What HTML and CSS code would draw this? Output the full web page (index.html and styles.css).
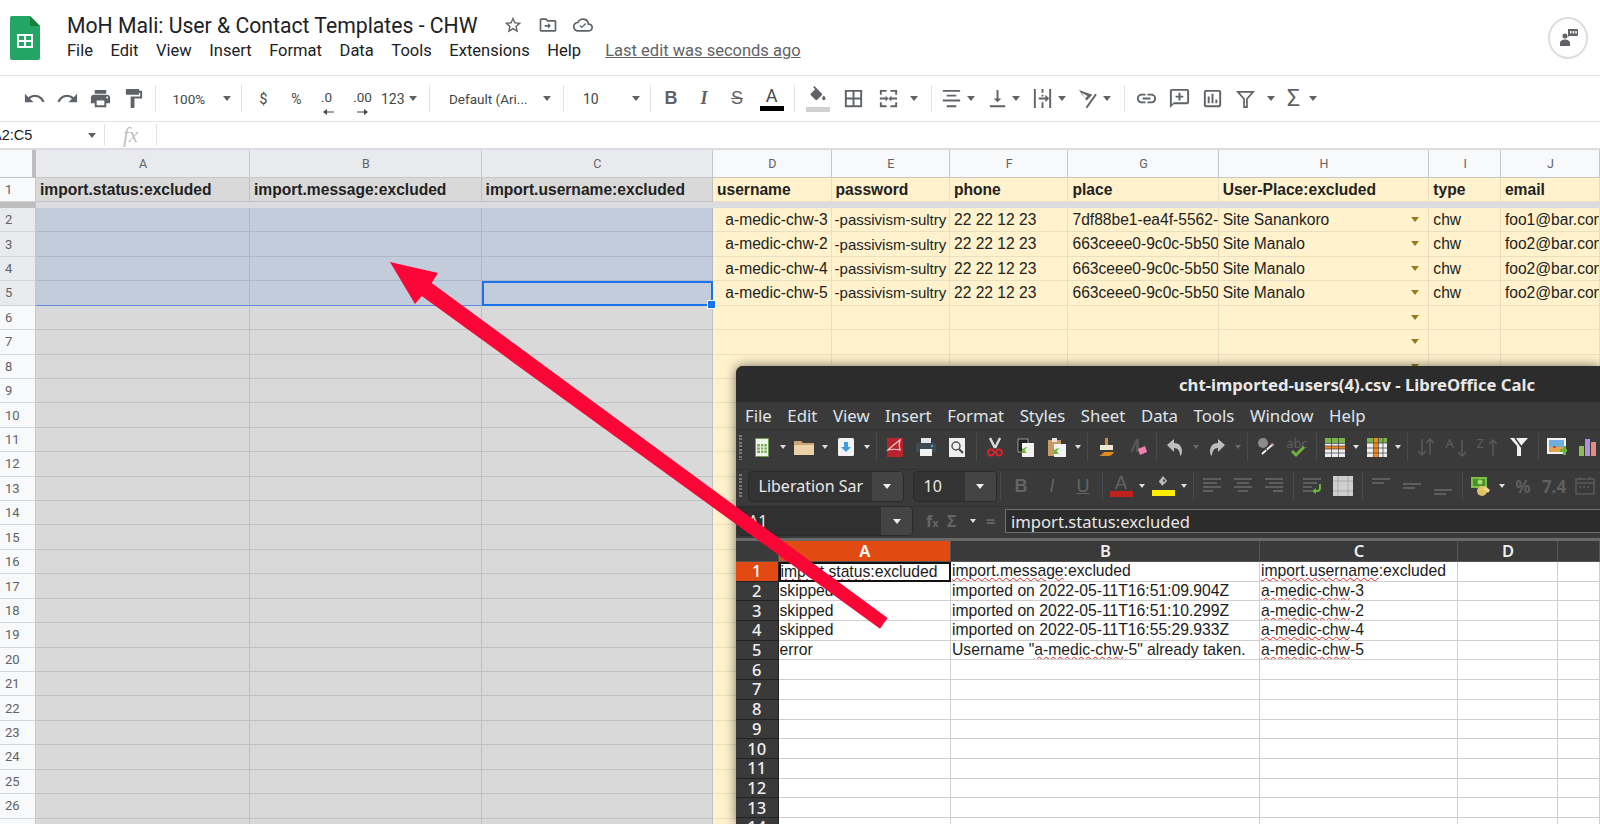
FILE: index.html
```html
<!DOCTYPE html>
<html lang="en">
<head>
  <meta charset="UTF-8">
  <title>MoH Mali: User &amp; Contact Templates - CHW</title>
  <link rel="stylesheet" href="styles.css">
</head>
<body>
  <!-- Sheets header -->
  <header class="doc-head">
    <svg class="sheets-logo" viewBox="0 0 30 44"><path fill="#23a566" d="M2 0h18l10 10v32a2 2 0 0 1-2 2H2a2 2 0 0 1-2-2V2a2 2 0 0 1 2-2z"/><path fill="#188038" d="M20 0l10 10H20z"/><path fill="#fff" d="M7 18h16v14H7zm2 2v4h5v-4zm7 0v4h5v-4zm-7 6v4h5v-4zm7 0v4h5v-4z"/></svg>
    <div class="doc-titles">
      <div class="title-line">
        <span class="doc-title">MoH Mali: User &amp; Contact Templates - CHW</span>
        <svg class="title-ic" viewBox="0 0 24 24"><path d="M22 9.24l-7.19-.62L12 2 9.19 8.63 2 9.24l5.46 4.73L5.82 21 12 17.27 18.18 21l-1.63-7.03L22 9.24zM12 15.4l-3.76 2.27 1-4.28-3.32-2.88 4.38-.38L12 6.1l1.71 4.04 4.38.38-3.32 2.88 1 4.28L12 15.4z"/></svg>
        <svg class="title-ic" viewBox="0 0 24 24"><path d="M20 6h-8l-2-2H4c-1.1 0-2 .9-2 2v12c0 1.1.9 2 2 2h16c1.1 0 2-.9 2-2V8c0-1.1-.9-2-2-2zm0 12H4V6h5.2l2 2H20v10z"/><path d="M12 9.5l3.5 3.5-3.5 3.500v-2.500H8v-2h4z"/></svg>
        <svg class="title-ic" viewBox="0 0 24 24"><path d="M19.35 10.04A7.49 7.49 0 0 0 12 4C9.110 4 6.600 5.640 5.350 8.040A5.994 5.994 0 0 0 0 14c0 3.310 2.690 6 6 6h13c2.760 0 5-2.240 5-5 0-2.640-2.050-4.780-4.650-4.960zM19 18H6c-2.210 0-4-1.790-4-4s1.790-4 4-4h.71A5.500 5.500 0 0 1 12 6a5.500 5.500 0 0 1 5.500 5.500v.5H19c1.660 0 3 1.340 3 3s-1.340 3-3 3z"/><path d="M10.500 16l-2.800-2.800 1.100-1.100 1.700 1.700 4.200-4.200 1.100 1.100z"/></svg>
      </div>
      <nav class="doc-menu">
        <span>File</span><span>Edit</span><span>View</span><span>Insert</span><span>Format</span><span>Data</span><span>Tools</span><span>Extensions</span><span>Help</span>
        <a class="last-edit">Last edit was seconds ago</a>
      </nav>
    </div>
    <div class="avatar">
      <svg viewBox="0 0 24 24"><circle cx="9" cy="10" r="2.500" fill="#5f6368"/><path fill="#5f6368" d="M4 20v-3c0-2 2.500-3.500 5-3.500s5 1.500 5 3.500v3z"/><path fill="#5f6368" d="M12 3h9a1 1 0 0 1 1 1v5a1 1 0 0 1-1 1h-8l-1 1z"/><path fill="#fff" d="M14 5h1.500v2.500H14zm2.700 0h1.500v2.500h-1.500zm2.600 0h1.500v2.500h-1.500z"/></svg>
    </div>
  </header>

  <!-- Sheets toolbar -->
  <div class="g-toolbar">
    <span class="g-btn"><svg viewBox="0 0 24 24"><path d="M12.500 8c-2.650 0-5.050.99-6.900 2.600L2 7v9h9l-3.620-3.620c1.390-1.160 3.160-1.880 5.120-1.880 3.540 0 6.550 2.310 7.600 5.500l2.370-.78C21.080 11.030 17.150 8 12.500 8z"/></svg></span>
    <span class="g-btn"><svg viewBox="0 0 24 24"><path d="M18.400 10.600C16.550 8.990 14.150 8 11.500 8c-4.650 0-8.580 3.030-9.960 7.220L3.900 16c1.050-3.190 4.050-5.500 7.600-5.500 1.950 0 3.730.72 5.120 1.880L13 16h9V7l-3.600 3.600z"/></svg></span>
    <span class="g-btn"><svg viewBox="0 0 24 24"><path d="M19 8H5c-1.660 0-3 1.340-3 3v6h4v4h12v-4h4v-6c0-1.660-1.340-3-3-3zm-3 11H8v-5h8v5zm3-7c-.55 0-1-.45-1-1s.45-1 1-1 1 .45 1 1-.45 1-1 1zm-1-9H6v4h12V3z"/></svg></span>
    <span class="g-btn"><svg viewBox="0 0 24 24"><path d="M18 4V3c0-.55-.45-1-1-1H5c-.55 0-1 .45-1 1v4c0 .55.45 1 1 1h12c.55 0 1-.45 1-1V6h1v4H9v11c0 .55.45 1 1 1h2c.55 0 1-.45 1-1v-9h8V4h-3z"/></svg></span>
    <i class="g-sep"></i>
    <span class="g-combo zoom-combo">100%<i class="g-caret"></i></span>
    <i class="g-sep"></i>
    <span class="g-btn g-txt">$</span>
    <span class="g-btn g-txt">%</span>
    <span class="g-btn dec-btn dec-less">.0<svg viewBox="0 0 12 6"><path d="M11 2.500H4V0L0 3l4 3V3.500h7z"/></svg></span>
    <span class="g-btn dec-btn">.00<svg viewBox="0 0 12 6"><path d="M1 2.500h7V0l4 3-4 3V3.500H1z"/></svg></span>
    <span class="g-combo num-combo">123<i class="g-caret"></i></span>
    <i class="g-sep"></i>
    <span class="g-combo font-combo">Default (Ari...<i class="g-caret"></i></span>
    <i class="g-sep"></i>
    <span class="g-combo size-combo">10<i class="g-caret"></i></span>
    <i class="g-sep"></i>
    <span class="g-btn g-fmt"><b>B</b></span>
    <span class="g-btn g-fmt"><em>I</em></span>
    <span class="g-btn g-fmt"><s>S</s></span>
    <span class="g-btn g-color">A<i class="color-bar black"></i></span>
    <i class="g-sep sep-wide"></i>
    <span class="g-btn g-color"><svg viewBox="0 0 24 24"><path d="M16.560 8.940L7.620 0 6.210 1.410l2.380 2.380-5.150 5.150c-.59.59-.59 1.540 0 2.120l5.500 5.500c.29.29.68.44 1.060.44s.77-.15 1.060-.44l5.500-5.500c.59-.58.59-1.530 0-2.120zM19 11.500s-2 2.170-2 3.500c0 1.100.9 2 2 2s2-.9 2-2c0-1.330-2-3.500-2-3.500z"/></svg><i class="color-bar grey"></i></span>
    <span class="g-btn gap-left"><svg viewBox="0 0 24 24"><path d="M3 3v18h18V3H3zm8 16H5v-6h6v6zm0-8H5V5h6v6zm8 8h-6v-6h6v6zm0-8h-6V5h6v6z"/></svg></span>
    <span class="g-btn gap-left2"><svg viewBox="0 0 24 24"><path d="M3 3h7v2H5v3H3zm11 0h7v5h-2V5h-5zM3 16h2v3h5v2H3zm16 0h2v5h-7v-2h5zM3 11h6V9l3 3-3 3v-2H3zm18 0h-6V9l-3 3 3 3v-2h6z"/></svg></span>
    <i class="g-caret solo merge-caret"></i>
    <i class="g-sep"></i>
    <span class="g-btn narrow"><svg viewBox="0 0 24 24"><path d="M3 3h18v2H3zm4 5h10v2H7zm-4 5h18v2H3zm4 6h10v2H7z"/></svg></span><i class="g-caret solo"></i>
    <span class="g-btn narrow"><svg viewBox="0 0 24 24"><path d="M4 19h16v2H4zM11 3h2v9h3l-4 4-4-4h3z"/></svg></span><i class="g-caret solo"></i>
    <span class="g-btn narrow"><svg viewBox="0 0 24 24"><path d="M3 2h2v20H3zm16 0h2v20h-2zM11 2h2v4h-2zm0 6h2v2h-2zm0 8h2v6h-2zM8 11h7V8l4 4-4 4v-3H8z"/></svg></span><i class="g-caret solo"></i>
    <span class="g-btn narrow"><svg viewBox="0 0 24 24"><path d="M2 3l14 5-6 6zm3 3l3.500 6 2.500-2.500zM9 21l10-14 1.700 1.200-10 14z"/></svg></span><i class="g-caret solo"></i>
    <i class="g-sep"></i>
    <span class="g-btn"><svg viewBox="0 0 24 24"><path d="M3.900 12c0-1.710 1.390-3.100 3.100-3.100h4V7H7c-2.760 0-5 2.240-5 5s2.240 5 5 5h4v-1.900H7c-1.710 0-3.100-1.390-3.100-3.100zM8 13h8v-2H8v2zm9-6h-4v1.900h4c1.710 0 3.100 1.390 3.100 3.100s-1.390 3.100-3.100 3.100h-4V17h4c2.760 0 5-2.240 5-5s-2.240-5-5-5z"/></svg></span>
    <span class="g-btn"><svg viewBox="0 0 24 24"><path d="M20 2H4c-1.100 0-2 .9-2 2v18l4-4h14c1.100 0 2-.9 2-2V4c0-1.100-.9-2-2-2zm0 14H6l-2 2V4h16v12zM11 6h2v3h3v2h-3v3h-2v-3H8V9h3z"/></svg></span>
    <span class="g-btn"><svg viewBox="0 0 24 24"><path d="M19 3H5c-1.100 0-2 .9-2 2v14c0 1.100.9 2 2 2h14c1.100 0 2-.9 2-2V5c0-1.100-.9-2-2-2zm0 16H5V5h14v14zM7 10h2v7H7zm4-3h2v10h-2zm4 6h2v4h-2z"/></svg></span>
    <span class="g-btn"><svg viewBox="0 0 24 24"><path class="funnel" d="M4 5h16l-6.500 7.500V21h-3v-8.500z"/></svg></span><i class="g-caret solo filter-caret"></i>
    <span class="g-btn sigma">&Sigma;</span><i class="g-caret solo"></i>
  </div>

  <!-- Formula bar -->
  <div class="g-formula">
    <span class="name-box">A2:C5</span>
    <i class="g-caret solo name-caret"></i>
    <i class="fx-sep"></i>
    <span class="fx">fx</span>
    <i class="fx-sep"></i>
  </div>

  <!-- Sheet grid -->
  <div class="sheet">
    <div class="row head-row">
      <span class="corner"></span><span class="on">A</span><span class="on">B</span><span class="on">C</span><span>D</span><span>E</span><span>F</span><span>G</span><span>H</span><span>I</span><span>J</span>
    </div>
    <div class="row title-row">
      <span class="rh">1</span><span>import.status:excluded</span><span>import.message:excluded</span><span>import.username:excluded</span><span>username</span><span>password</span><span>phone</span><span>place</span><span>User-Place:excluded</span><span>type</span><span>email</span>
    </div>
    <div class="freeze"></div>
    <div class="row sel"><span class="rh">2</span><span></span><span></span><span></span><span class="ra">a-medic-chw-3</span><span class="pw">-passivism-sultry</span><span>22 22 12 23</span><span>7df88be1-ea4f-5562-</span><span class="dd">Site Sanankoro</span><span>chw</span><span>foo1@bar.com</span></div>
    <div class="row sel"><span class="rh">3</span><span></span><span></span><span></span><span class="ra">a-medic-chw-2</span><span class="pw">-passivism-sultry</span><span>22 22 12 23</span><span>663ceee0-9c0c-5b50</span><span class="dd">Site Manalo</span><span>chw</span><span>foo2@bar.com</span></div>
    <div class="row sel"><span class="rh">4</span><span></span><span></span><span></span><span class="ra">a-medic-chw-4</span><span class="pw">-passivism-sultry</span><span>22 22 12 23</span><span>663ceee0-9c0c-5b50</span><span class="dd">Site Manalo</span><span>chw</span><span>foo2@bar.com</span></div>
    <div class="row sel sel-last"><span class="rh">5</span><span></span><span></span><span class="active"></span><span class="ra">a-medic-chw-5</span><span class="pw">-passivism-sultry</span><span>22 22 12 23</span><span>663ceee0-9c0c-5b50</span><span class="dd">Site Manalo</span><span>chw</span><span>foo2@bar.com</span></div>
    <div class="row"><span class="rh">6</span><span></span><span></span><span></span><span></span><span></span><span></span><span></span><span class="dd"></span><span></span><span></span></div>
    <div class="row"><span class="rh">7</span><span></span><span></span><span></span><span></span><span></span><span></span><span></span><span class="dd"></span><span></span><span></span></div>
    <div class="row"><span class="rh">8</span><span></span><span></span><span></span><span></span><span></span><span></span><span></span><span class="dd"></span><span></span><span></span></div>
    <div class="row"><span class="rh">9</span><span></span><span></span><span></span><span></span><span></span><span></span><span></span><span class="dd"></span><span></span><span></span></div>
    <div class="row"><span class="rh">10</span><span></span><span></span><span></span><span></span><span></span><span></span><span></span><span></span><span></span><span></span></div>
    <div class="row"><span class="rh">11</span><span></span><span></span><span></span><span></span><span></span><span></span><span></span><span></span><span></span><span></span></div>
    <div class="row"><span class="rh">12</span><span></span><span></span><span></span><span></span><span></span><span></span><span></span><span></span><span></span><span></span></div>
    <div class="row"><span class="rh">13</span><span></span><span></span><span></span><span></span><span></span><span></span><span></span><span></span><span></span><span></span></div>
    <div class="row"><span class="rh">14</span><span></span><span></span><span></span><span></span><span></span><span></span><span></span><span></span><span></span><span></span></div>
    <div class="row"><span class="rh">15</span><span></span><span></span><span></span><span></span><span></span><span></span><span></span><span></span><span></span><span></span></div>
    <div class="row"><span class="rh">16</span><span></span><span></span><span></span><span></span><span></span><span></span><span></span><span></span><span></span><span></span></div>
    <div class="row"><span class="rh">17</span><span></span><span></span><span></span><span></span><span></span><span></span><span></span><span></span><span></span><span></span></div>
    <div class="row"><span class="rh">18</span><span></span><span></span><span></span><span></span><span></span><span></span><span></span><span></span><span></span><span></span></div>
    <div class="row"><span class="rh">19</span><span></span><span></span><span></span><span></span><span></span><span></span><span></span><span></span><span></span><span></span></div>
    <div class="row"><span class="rh">20</span><span></span><span></span><span></span><span></span><span></span><span></span><span></span><span></span><span></span><span></span></div>
    <div class="row"><span class="rh">21</span><span></span><span></span><span></span><span></span><span></span><span></span><span></span><span></span><span></span><span></span></div>
    <div class="row"><span class="rh">22</span><span></span><span></span><span></span><span></span><span></span><span></span><span></span><span></span><span></span><span></span></div>
    <div class="row"><span class="rh">23</span><span></span><span></span><span></span><span></span><span></span><span></span><span></span><span></span><span></span><span></span></div>
    <div class="row"><span class="rh">24</span><span></span><span></span><span></span><span></span><span></span><span></span><span></span><span></span><span></span><span></span></div>
    <div class="row"><span class="rh">25</span><span></span><span></span><span></span><span></span><span></span><span></span><span></span><span></span><span></span><span></span></div>
    <div class="row"><span class="rh">26</span><span></span><span></span><span></span><span></span><span></span><span></span><span></span><span></span><span></span><span></span></div>
    <div class="row"><span class="rh"></span><span></span><span></span><span></span><span></span><span></span><span></span><span></span><span></span><span></span><span></span></div>
  </div>

  <!-- LibreOffice window on top -->
  <section class="lo-window">
    <div class="lo-title">cht-imported-users(4).csv - LibreOffice Calc</div>
    <nav class="lo-menu">
      <span>File</span><span>Edit</span><span>View</span><span>Insert</span><span>Format</span><span>Styles</span><span>Sheet</span><span>Data</span><span>Tools</span><span>Window</span><span>Help</span>
    </nav>

    <div class="lo-bar">
      <i class="grip"></i>
      <span class="lo-btn"><svg viewBox="0 0 20 20"><path fill="#eef5e6" stroke="#6d9c55" d="M3.500 1.500h13v18h-13z"/><path fill="#7fae62" d="M5 7h10v9H5z"/><path stroke="#eef5e6" d="M5 10h10M5 13h10M8.500 7v9M11.800 7v9"/></svg></span><i class="lo-caret"></i>
      <span class="lo-btn"><svg viewBox="0 0 20 20"><path fill="#c9a878" d="M0 4h7l2 2h11v3H0z"/><path fill="#ecd2a6" d="M0 8h20v10H0z"/></svg></span><i class="lo-caret"></i>
      <span class="lo-btn"><svg viewBox="0 0 20 20"><rect x="2" y="1" width="16" height="18" rx="1.500" fill="#f2f2f2"/><path fill="#3d9ee0" d="M8 5h4v5h3l-5 5-5-5h3z"/></svg></span><i class="lo-caret"></i>
      <i class="lo-sep"></i>
      <span class="lo-btn"><svg viewBox="0 0 20 20"><path fill="#b8232d" d="M2 1h16v19H2z"/><path fill="none" stroke="#f3d6d6" stroke-width="1.200" d="M15 3C11 6 6 10 3 13c4-1 8-1 12 0-1-3-1-7 0-10z"/></svg></span>
      <span class="lo-btn"><svg viewBox="0 0 20 20"><path fill="#e6e6e6" d="M5 1h10v5H5z"/><rect y="6" width="20" height="9" rx="2" fill="#3f4a52"/><path fill="#f2f2f2" d="M4 12h12v7H4z"/><path fill="#4ca3dd" d="M15 8h2v2h-2z"/></svg></span>
      <span class="lo-btn"><svg viewBox="0 0 20 20"><path fill="#efefef" d="M2 1h16v19H2z"/><circle cx="9" cy="9" r="4" fill="none" stroke="#555" stroke-width="1.500"/><path stroke="#444" stroke-width="2" d="M12 12l4 4"/></svg></span>
      <i class="lo-sep"></i>
      <span class="lo-btn"><svg viewBox="0 0 20 20"><path stroke="#d9d9d9" stroke-width="2.500" d="M5 1l5 10M15 1l-5 10"/><circle cx="6" cy="15.500" r="3" fill="none" stroke="#d6222a" stroke-width="2"/><circle cx="14" cy="15.500" r="3" fill="none" stroke="#d6222a" stroke-width="2"/></svg></span>
      <span class="lo-btn"><svg viewBox="0 0 20 20"><path fill="#222" stroke="#ddd" stroke-width=".6" d="M2 2h10v13H2z"/><path fill="#f2f2f2" d="M6 6h12v14H6z"/><path fill="#6fb33a" d="M14 13a4 4 0 0 0-7-1l-1-1v5h5l-2-2a2.500 2.500 0 0 1 5-1z"/></svg></span>
      <span class="lo-btn"><svg viewBox="0 0 20 20"><path fill="#c69c62" d="M1 3h13v16H1z"/><path fill="#e2e2e2" d="M5 1h5v4H5z"/><path fill="#f2f2f2" d="M7 7h12v13H7z"/><path fill="#6fb33a" d="M15 14a4 4 0 0 0-7-1l-1-1v5h5l-2-2a2.500 2.500 0 0 1 5-1z"/></svg></span><i class="lo-caret"></i>
      <i class="lo-sep"></i>
      <span class="lo-btn"><svg viewBox="0 0 20 20"><path fill="#c98f3c" d="M9 1h3v7H9z"/><path fill="#efe7d5" d="M4 8h13v5H4z"/><path fill="#e28a1e" d="M1 19c4 0 5-2 7-4h10c-1 2-3 4-6 4z"/></svg></span>
      <span class="lo-btn"><svg viewBox="0 0 20 20"><path fill="#555" d="M9 2h3v13H9zM3 15l6-13 1 2-4 11z"/><path fill="#f27fb0" d="M11 12l7-3 2 6-7 3z"/></svg></span>
      <i class="lo-sep"></i>
      <span class="lo-btn"><svg viewBox="0 0 20 20"><path fill="#bdbdbd" d="M9 2v4c5 0 8 3 8 9 0 2-1 3-2 4 0-5-2-8-6-8v4L2 8z"/></svg></span><i class="lo-caret dim"></i>
      <span class="lo-btn"><svg viewBox="0 0 20 20"><path fill="#bdbdbd" d="M11 2v4c-5 0-8 3-8 9 0 2 1 3 2 4 0-5 2-8 6-8v4l7-7z"/></svg></span><i class="lo-caret dim"></i>
      <i class="lo-sep"></i>
      <span class="lo-btn"><svg viewBox="0 0 20 20"><circle cx="7" cy="6" r="5" fill="#8b8b8b"/><path stroke="#eee" stroke-width="2" d="M6 17L16 8"/><path fill="#ef8fc0" d="M15 6l3 1-1 3z"/><path stroke="#333" d="M9 11l6 7"/></svg></span>
      <span class="lo-btn lo-dim-txt">abc<svg viewBox="0 0 20 20"><path fill="none" stroke="#6fb33a" stroke-width="3" d="M4 13l4 4 8-8"/></svg></span>
      <i class="lo-sep"></i>
      <span class="lo-btn"><svg viewBox="0 0 20 20"><path fill="#eee" d="M0 1h20v19H0z"/><path fill="#79b34a" d="M0 1h20v5H0z"/><path fill="#f08a1c" d="M0 9h20v3H0z"/><path stroke="#3b3b3b" stroke-width=".7" d="M0 6.500h20M0 9h20M0 12h20M0 16h20M6.500 1v19M13.500 1v19"/></svg></span><i class="lo-caret"></i>
      <span class="lo-btn"><svg viewBox="0 0 20 20"><path fill="#eee" d="M0 1h20v19H0z"/><path fill="#79b34a" d="M0 1h20v5H0z"/><path fill="#f08a1c" d="M7 1h4v19H7z"/><path stroke="#3b3b3b" stroke-width=".7" d="M0 6h20M0 11h20M0 16h20M6.500 1v19M11.500 1v19M16 1v19"/></svg></span><i class="lo-caret"></i>
      <i class="lo-sep"></i>
      <span class="lo-btn"><svg viewBox="0 0 20 20"><path fill="none" stroke="#5a5a5a" stroke-width="1.500" d="M6 2v16M2 14l4 4 4-4M14 18V2M10 6l4-4 4 4"/></svg></span>
      <span class="lo-btn lo-dim-txt sort-txt">A<svg viewBox="0 0 20 20"><path fill="none" stroke="#5a5a5a" stroke-width="1.500" d="M14 2v16M10 14l4 4 4-4"/></svg></span>
      <span class="lo-btn lo-dim-txt sort-txt">Z<svg viewBox="0 0 20 20"><path fill="none" stroke="#5a5a5a" stroke-width="1.500" d="M14 18V2M10 6l4-4 4 4"/></svg></span>
      <span class="lo-btn"><svg viewBox="0 0 20 20"><path fill="#f2f2f2" d="M1 1h18l-7 8v10H8V9z"/><path stroke="#3b3b3b" stroke-width="1.500" d="M6 1l12 17"/></svg></span>
      <i class="lo-sep"></i>
      <span class="lo-btn"><svg viewBox="0 0 20 20"><path fill="#f2f2f2" d="M0 1h19v16H0z"/><path fill="#6eaedb" d="M2 3h15v7H2z"/><path fill="#e7a24c" d="M2 10h15v5H2z"/><path fill="#d04a3a" d="M6 9h3v2H6z"/><path fill="#6fb33a" d="M13 12h3v-3h3v3h3v3h-3v3h-3v-3h-3z"/></svg></span>
      <span class="lo-btn"><svg viewBox="0 0 20 20"><path fill="#8cc152" d="M1 9h5v10H1z"/><path fill="#b191d6" d="M7 2h5v17H7z"/><path fill="#e98c7d" d="M13 5h5v14h-5z"/></svg></span>
    </div>

    <div class="lo-bar lo-bar2">
      <i class="grip"></i>
      <span class="lo-combo font-box"><em>Liberation Sar</em><i class="lo-drop"></i></span>
      <span class="lo-combo size-box"><em>10</em><i class="lo-drop"></i></span>
      <i class="lo-sep"></i>
      <span class="lo-btn lo-fmt"><b>B</b></span>
      <span class="lo-btn lo-fmt"><i>I</i></span>
      <span class="lo-btn lo-fmt"><u>U</u></span>
      <i class="lo-sep"></i>
      <span class="lo-btn lo-fmt lo-color">A<i class="lo-swatch red"></i></span><i class="lo-caret"></i>
      <span class="lo-btn lo-color"><svg viewBox="0 0 20 20"><path fill="#bbb" d="M10 0l6 7-7 7-5-6z"/><path fill="#444" d="M10 5h3v3h-3z"/></svg><i class="lo-swatch yellow"></i></span><i class="lo-caret"></i>
      <i class="lo-sep"></i>
      <span class="lo-btn"><svg viewBox="0 0 20 20"><path class="lines" d="M1 3h18M1 7h14M1 11h18M1 15h10"/></svg></span>
      <span class="lo-btn"><svg viewBox="0 0 20 20"><path class="lines" d="M1 3h18M4 7h12M1 11h18M5 15h10"/></svg></span>
      <span class="lo-btn"><svg viewBox="0 0 20 20"><path class="lines" d="M1 3h18M5 7h14M1 11h18M9 15h10"/></svg></span>
      <i class="lo-sep"></i>
      <span class="lo-btn"><svg viewBox="0 0 20 20"><path class="lines" d="M1 3h18M1 7h14M1 11h9M1 15h9"/><path fill="none" stroke="#6fb33a" stroke-width="2" d="M18 8v4c0 2-1 3-3 3h-3"/><path fill="#6fb33a" d="M14 12v6l-4-3z"/></svg></span>
      <span class="lo-btn"><svg viewBox="0 0 20 20"><path fill="#cfcfcf" d="M0 0h20v20H0z"/><path stroke="#a9a9a9" d="M0 5h20M0 15h20M5 0v20M15 0v20"/></svg></span>
      <i class="lo-sep"></i>
      <span class="lo-btn"><svg viewBox="0 0 20 20"><path class="lines" d="M1 3h18M1 7h12"/></svg></span>
      <span class="lo-btn"><svg viewBox="0 0 20 20"><path class="lines" d="M1 8h18M1 12h12"/></svg></span>
      <span class="lo-btn"><svg viewBox="0 0 20 20"><path class="lines" d="M1 14h18M1 18h12"/></svg></span>
      <i class="lo-sep"></i>
      <span class="lo-btn"><svg viewBox="0 0 20 20"><path fill="#7cc04a" d="M0 1h16v11H0zm4 2h10v7H4z" /><path fill="#4e8f2c" d="M2 3h12v7H2z"/><circle cx="9" cy="6" r="2.500" fill="#9fdc6c"/><circle cx="11" cy="15" r="5" fill="#e0c268"/><path fill="#f2d78a" d="M14 10l5 4-2 3-5-4z"/></svg></span><i class="lo-caret"></i>
      <span class="lo-btn lo-dim-big">%</span>
      <span class="lo-btn lo-dim-big">7.4</span>
      <span class="lo-btn"><svg viewBox="0 0 20 20"><path fill="none" stroke="#5a5a5a" stroke-width="1.500" d="M1 3h18v15H1zM1 7h18"/><path stroke="#5a5a5a" stroke-width="1.500" d="M5 1v3M15 1v3M4 11h2M8 11h2M12 11h2"/></svg></span>
    </div>

    <div class="lo-formula">
      <span class="lo-combo cell-box"><em>A1</em><i class="lo-drop"></i></span>
      <span class="lo-fx">f<small>x</small></span>
      <span class="lo-fx lo-sum">&Sigma;</span>
      <i class="lo-caret"></i>
      <span class="lo-fx lo-eq">=</span>
      <span class="lo-input">import.status:excluded</span>
    </div>

    <div class="lo-grid">
      <div class="lo-row lo-head"><span></span><span class="cur">A</span><span>B</span><span>C</span><span>D</span><span></span></div>
      <div class="lo-row lo-cur"><span class="rn cur">1</span><span class="cursor"><u>import.status</u>:excluded</span><span><u>import.message</u>:excluded</span><span><u>import.username</u>:excluded</span><span></span><span></span></div>
      <div class="lo-row"><span class="rn">2</span><span>skipped</span><span>imported on 2022-05-11T16:51:09.904Z</span><span><u>a-medic-chw</u>-3</span><span></span><span></span></div>
      <div class="lo-row"><span class="rn">3</span><span>skipped</span><span>imported on 2022-05-11T16:51:10.299Z</span><span><u>a-medic-chw</u>-2</span><span></span><span></span></div>
      <div class="lo-row"><span class="rn">4</span><span>skipped</span><span>imported on 2022-05-11T16:55:29.933Z</span><span><u>a-medic-chw</u>-4</span><span></span><span></span></div>
      <div class="lo-row"><span class="rn">5</span><span>error</span><span>Username "<u>a-medic-chw</u>-5" already taken.</span><span><u>a-medic-chw</u>-5</span><span></span><span></span></div>
      <div class="lo-row"><span class="rn">6</span><span></span><span></span><span></span><span></span><span></span></div>
      <div class="lo-row"><span class="rn">7</span><span></span><span></span><span></span><span></span><span></span></div>
      <div class="lo-row"><span class="rn">8</span><span></span><span></span><span></span><span></span><span></span></div>
      <div class="lo-row"><span class="rn">9</span><span></span><span></span><span></span><span></span><span></span></div>
      <div class="lo-row"><span class="rn">10</span><span></span><span></span><span></span><span></span><span></span></div>
      <div class="lo-row"><span class="rn">11</span><span></span><span></span><span></span><span></span><span></span></div>
      <div class="lo-row"><span class="rn">12</span><span></span><span></span><span></span><span></span><span></span></div>
      <div class="lo-row"><span class="rn">13</span><span></span><span></span><span></span><span></span><span></span></div>
      <div class="lo-row"><span class="rn">14</span><span></span><span></span><span></span><span></span><span></span></div>
    </div>
  </section>

  <!-- Annotation arrow -->
  <svg class="arrow" viewBox="0 0 1600 824"><path fill="#f90636" d="M390 262L438 273 431.700 283 887.600 618 880 628.700 421.700 296 415 304z"/></svg>
</body>
</html>
```
FILE: styles.css
```css
* {
  box-sizing: border-box;
}

html, body {
  margin: 0;
  height: 824px;
  overflow: hidden;
}

body {
  position: relative;
  background: #fff;
  font-family: Roboto, "Liberation Sans", sans-serif;
  color: #202124;
}

i, em {
  font-style: normal;
}

/* Document header */
.doc-head {
  height: 76px;
  display: flex;
  border-bottom: 1px solid #e0e2e5;
  padding-left: 10px;
}

.sheets-logo {
  width: 30px;
  height: 44px;
  margin-top: 16px;
}

.doc-titles {
  margin-left: 27px;
  padding-top: 11px;
}

.title-line {
  display: flex;
  align-items: center;
  height: 28px;
  gap: 15px;
}

.doc-title {
  font-size: 21.200px;
  margin-right: 10px;
  white-space: nowrap;
}

.title-ic {
  width: 20px;
  height: 20px;
  fill: #5f6368;
}

.doc-menu {
  display: flex;
  align-items: center;
  gap: 17.600px;
  margin-top: 2px;
  font-size: 16.500px;
  white-space: nowrap;
}

.last-edit {
  margin-left: 6.500px;
  color: #5f6368;
  text-decoration: underline;
}

.avatar {
  margin-left: auto;
  margin-right: 12px;
  margin-top: 17px;
  width: 40px;
  height: 42px;
  border: 2px solid #dadce0;
  border-radius: 50%;
  display: flex;
  align-items: center;
  justify-content: center;
}

.avatar svg {
  width: 24px;
  height: 24px;
}

/* Sheets toolbar */
.g-toolbar {
  height: 46px;
  display: flex;
  align-items: center;
  padding-left: 17.500px;
  border-bottom: 1px solid #e0e2e5;
  font-size: 13.500px;
  color: #444746;
  white-space: nowrap;
}

.g-btn {
  position: relative;
  width: 33px;
  height: 34px;
  flex: none;
  display: flex;
  align-items: center;
  justify-content: center;
}

.g-btn svg {
  width: 23px;
  height: 23px;
  fill: #5f6368;
}

.g-btn svg .funnel {
  fill: none;
  stroke: #5f6368;
  stroke-width: 1.800px;
}

.g-btn.narrow {
  width: 30px;
}

.gap-left {
  margin-left: 3px;
}

.gap-left2 {
  margin-left: 2px;
}

.g-sep {
  width: 1px;
  height: 27px;
  flex: none;
  margin: 0 5px;
  background: #e0e2e5;
}

.sep-wide {
  margin: 0 6px 0 6px;
}

.g-combo {
  flex: none;
  display: flex;
  align-items: center;
  justify-content: space-between;
}

.zoom-combo {
  width: 75.500px;
  padding: 0 5px 0 12px;
}

.num-combo {
  width: 45px;
  padding-left: 2px;
  font-size: 14px;
  padding-right: 7px;
}

.font-combo {
  width: 123px;
  padding: 0 7px 0 14px;
}

.size-combo {
  width: 76px;
  padding: 0 5px 0 14px;
  font-size: 14px;
}

.g-caret {
  width: 0;
  height: 0;
  border: 4px solid transparent;
  border-top: 5px solid #5f6368;
  border-bottom: 0;
  flex: none;
}

.g-caret.solo {
  margin-right: 7.500px;
}

.merge-caret {
  margin-left: 5px;
}

.g-caret.filter-caret {
  margin-left: 5px;
  margin-right: 7px;
}

.g-txt {
  font-size: 14px;
}

.dec-btn {
  font-size: 13.500px;
  padding-bottom: 3px;
}

.dec-less {
  padding-right: 6px;
}

.dec-btn svg {
  position: absolute;
  left: 10px;
  bottom: 1px;
  width: 12px;
  height: 6px;
  fill: #444746;
}

.g-fmt {
  font-family: "Liberation Sans", sans-serif;
  font-size: 18px;
  color: #5f6368;
  padding-right: 3px;
}

.g-fmt em {
  font-style: italic;
  font-family: "Liberation Serif", serif;
  font-weight: 700;
}

.g-color {
  flex-direction: column;
  font-size: 18px;
  line-height: 18px;
}

.g-color svg {
  width: 20px;
  height: 20px;
}

.color-bar {
  width: 24px;
  height: 5px;
  margin-top: 1px;
}

.color-bar.black {
  background: #000;
}

.color-bar.grey {
  background: #d0d0d0;
}

.sigma {
  font-size: 23px;
  color: #5f6368;
  width: 24px;
  margin-left: 0;
  margin-right: 3px;
}

/* Formula bar */
.g-formula {
  height: 28px;
  display: flex;
  align-items: center;
  border-bottom: 2px solid #dadce0;
  font-family: "Liberation Sans", sans-serif;
}

.name-box {
  margin-left: -8px;
  font-size: 14.500px;
  color: #222;
  width: 96px;
}

.g-caret.name-caret {
  margin-left: 0;
  margin-right: 8px;
}

.fx-sep {
  width: 1px;
  height: 22px;
  background: #e0e2e5;
}

.fx {
  width: 51px;
  text-align: center;
  font-family: "Liberation Serif", serif;
  font-style: italic;
  font-size: 21px;
  color: #bdc1c6;
}

/* Sheet grid */
.sheet {
  display: flex;
  flex-direction: column;
}

.row {
  display: grid;
  grid-template-columns: 36px 214px 231.600px 231.400px 118.600px 118.400px 118.500px 150.200px 210.700px 71.600px 99px;
  height: 24.430px;
  flex: none;
  font-family: "Liberation Sans", sans-serif;
  font-size: 15.600px;
  color: #222;
}

.row span {
  display: flex;
  align-items: center;
  position: relative;
  padding: 0 3px 0 4px;
  white-space: nowrap;
  overflow: hidden;
  background: #fff2cc;
  border-right: 1px solid #eadfbf;
  border-bottom: 1px solid #eadfbf;
}

.row span:nth-child(-n+4) {
  background: #d9d9d9;
  border-color: #c0c0c0;
}

.row span.pw {
  font-size: 15px;
  padding-left: 3px;
}

.row span.rh {
  background: #f8f9fa;
  border-right: 1px solid #c7c7c7;
  border-bottom-color: #d5d5d5;
  justify-content: flex-start;
  padding-left: 5px;
  font-family: Roboto, sans-serif;
  font-size: 13px;
  font-weight: 400;
  color: #5f6368;
}

.sel span:nth-child(n+2):nth-child(-n+4) {
  background: #c3ccda;
  border-color: #aeb8c9;
}

.sel span.rh {
  background: #e8eaed;
}

.sel-last span:nth-child(n+2):nth-child(-n+4) {
  border-bottom-color: #5d8ade;
}

.row span.active {
  overflow: visible;
  outline: 2px solid #1a73e8;
  outline-offset: -2px;
  z-index: 1;
}

.active::after {
  content: "";
  position: absolute;
  right: -4px;
  bottom: -4px;
  width: 7px;
  height: 7px;
  background: #1a73e8;
  border: 1px solid #fff;
}

.ra {
  justify-content: flex-end;
}

.row span.dd::after {
  content: "";
  position: absolute;
  right: 9px;
  top: 9px;
  border: 4.500px solid transparent;
  border-top: 5px solid #9a7a1c;
  border-bottom: 0;
}

.head-row {
  height: 28px;
  font-family: Roboto, sans-serif;
  font-size: 12.500px;
  color: #5f6368;
}

.row.head-row span {
  justify-content: center;
  background: #f8f9fa;
  border-color: #c7c7c7;
  border-top: 0;
}

.row.head-row span.on {
  background: #e8eaed;
}

.row.head-row span.corner {
  background: #f8f9fa;
  border-right: 4px solid #bdbdbd;
}

.title-row {
  height: 24px;
  font-weight: 700;
}

.freeze {
  height: 6px;
  flex: none;
  background: linear-gradient(to right, #bdbdbd 36px, #dadce0 36px);
}

/* LibreOffice window */
.lo-window {
  position: absolute;
  left: 736px;
  top: 366px;
  width: 864px;
  height: 458px;
  border-radius: 7px 0 0 0;
  background: #3a3a3a;
  box-shadow: 0 0 12px rgba(0, 0, 0, 0.55);
  overflow: hidden;
  font-family: "Noto Sans", sans-serif;
  color: #e8e8e8;
}

.lo-title {
  height: 36px;
  background: #2c2c2c;
  display: flex;
  align-items: center;
  padding-left: 443px;
  font-size: 16.700px;
  font-weight: 700;
  white-space: nowrap;
}

.lo-menu {
  height: 28px;
  display: flex;
  align-items: center;
  gap: 15.500px;
  padding-left: 9px;
  font-size: 16.800px;
  color: #dfe4ea;
  border-bottom: 1px solid #333;
}

.lo-bar {
  height: 40px;
  display: flex;
  align-items: center;
  padding-left: 3px;
  padding-bottom: 5px;
  border-bottom: 1px solid #333;
  white-space: nowrap;
}

.lo-bar2 {
  height: 37px;
  padding-bottom: 4px;
}

.grip {
  width: 3px;
  height: 25px;
  flex: none;
  margin-right: 4.500px;
  background: repeating-linear-gradient(to bottom, #777 0 2px, transparent 2px 3.500px);
}

.lo-btn {
  position: relative;
  width: 31px;
  height: 26px;
  flex: none;
  display: flex;
  align-items: center;
  justify-content: center;
}

.lo-btn svg {
  width: 20px;
  height: 20px;
}

.lo-caret {
  width: 11px;
  flex: none;
  height: 4px;
  display: flex;
  justify-content: center;
}

.lo-caret::before {
  content: "";
  border: 3.500px solid transparent;
  border-top: 4px solid #e0e0e0;
  border-bottom: 0;
}

.lo-caret.dim::before {
  border-top-color: #6a6a6a;
}

.lo-sep {
  width: 7px;
  height: 28px;
  flex: none;
  background: linear-gradient(#4a4a4a, #4a4a4a) center / 1px 100% no-repeat;
}

.lo-combo {
  height: 31px;
  flex: none;
  display: flex;
  border: 1px solid #2a2a2a;
  border-radius: 4px;
  background: #333;
  font-size: 16px;
  overflow: hidden;
}

.lo-combo em {
  flex: 1;
  display: flex;
  align-items: center;
  padding-left: 10px;
  white-space: nowrap;
  overflow: hidden;
}

.lo-drop {
  width: 31px;
  flex: none;
  background: #444;
  display: flex;
  align-items: center;
  justify-content: center;
}

.lo-drop::before {
  content: "";
  border: 4.500px solid transparent;
  border-top: 5px solid #eee;
  border-bottom: 0;
}

.font-box {
  width: 156px;
  margin-left: 1px;
}

.size-box {
  width: 84px;
  margin-left: 9px;
}

.size-box em {
  padding-left: 10px;
}

.lo-bar2 .size-box + .lo-sep {
  margin-right: 2px;
}

.lo-fmt {
  font-family: "Liberation Sans", sans-serif;
  font-size: 18px;
  color: #646464;
}

.lo-fmt i {
  font-style: italic;
}

.lo-color {
  flex-direction: column;
  line-height: 16px;
}

.lo-color svg {
  height: 14px;
}

.lo-swatch {
  width: 23px;
  height: 6px;
}

.lo-swatch.red {
  background: #c1201d;
}

.lo-swatch.yellow {
  background: #ffee00;
}

.lines {
  fill: none;
  stroke: #6b6b6b;
  stroke-width: 1.300px;
}

.lo-dim-txt {
  font-size: 13px;
  color: #5f5f5f;
  align-items: flex-start;
}

.lo-dim-txt svg {
  position: absolute;
  left: 6px;
  top: 4px;
}

.sort-txt {
  justify-content: flex-start;
  padding-left: 4px;
}

.lo-dim-big {
  font-size: 17px;
  font-weight: 700;
  color: #5f5f5f;
}

.lo-formula {
  height: 33px;
  display: flex;
  align-items: center;
  padding-left: 1px;
  padding-bottom: 3px;
  border-bottom: 2px solid #6a6a6a;
}

.cell-box {
  width: 176px;
  height: 30px;
  background: #303030;
}

.lo-fx {
  font-size: 16px;
  color: #666;
  flex: none;
  font-weight: 700;
}

.cell-box + .lo-fx {
  margin-left: 13px;
  width: 21px;
}

.lo-fx small {
  font-size: 11px;
}

.lo-sum {
  width: 20px;
  margin-left: 0;
}

.lo-eq {
  margin-left: 8px;
  width: 18px;
}

.lo-input {
  flex: 1;
  height: 24px;
  margin-left: 1px;
  padding-left: 5px;
  display: flex;
  align-items: center;
  background: #2c2c2c;
  border: 1px solid #707070;
  border-right: 0;
  font-size: 16.600px;
  white-space: nowrap;
}

/* LibreOffice cells */
.lo-grid {
  display: flex;
  flex-direction: column;
}

.lo-row {
  display: grid;
  grid-template-columns: 42.500px 172.500px 309px 198px 100px 42px;
  height: 19.700px;
  line-height: 18px;
  flex: none;
  background: #fff;
  font-family: "Liberation Sans", sans-serif;
  font-size: 15.700px;
  color: #1c1c1c;
}

.lo-row span {
  display: flex;
  align-items: center;
  padding-left: 1px;
  white-space: nowrap;
  overflow: hidden;
  border-right: 1px solid #cfcfcf;
  border-bottom: 1px solid #cfcfcf;
}

.lo-row u {
  text-decoration: underline wavy #e0201c 1px;
  text-underline-offset: 1px;
}

.lo-row .rn {
  justify-content: center;
  padding: 0;
  background: #3a3a3a;
  color: #efefef;
  font-family: "Noto Sans", sans-serif;
  font-size: 16.500px;
  font-weight: 500;
  border-color: #222;
}

.lo-head {
  height: 22px;
  background: #3a3a3a;
  border-top: 1px solid #6a6a6a;
  color: #eee;
  font-family: "Noto Sans", sans-serif;
  font-size: 16.500px;
  font-weight: 600;
}

.lo-head span {
  justify-content: center;
  border-color: #555;
}

.lo-row .cur {
  background: #e24a13;
  color: #fff;
}

.lo-row .cursor {
  border: 2px solid #111;
  padding-left: 0;
}

/* Arrow overlay */
.arrow {
  position: absolute;
  left: 0;
  top: 0;
  width: 1600px;
  height: 824px;
  pointer-events: none;
}
```
